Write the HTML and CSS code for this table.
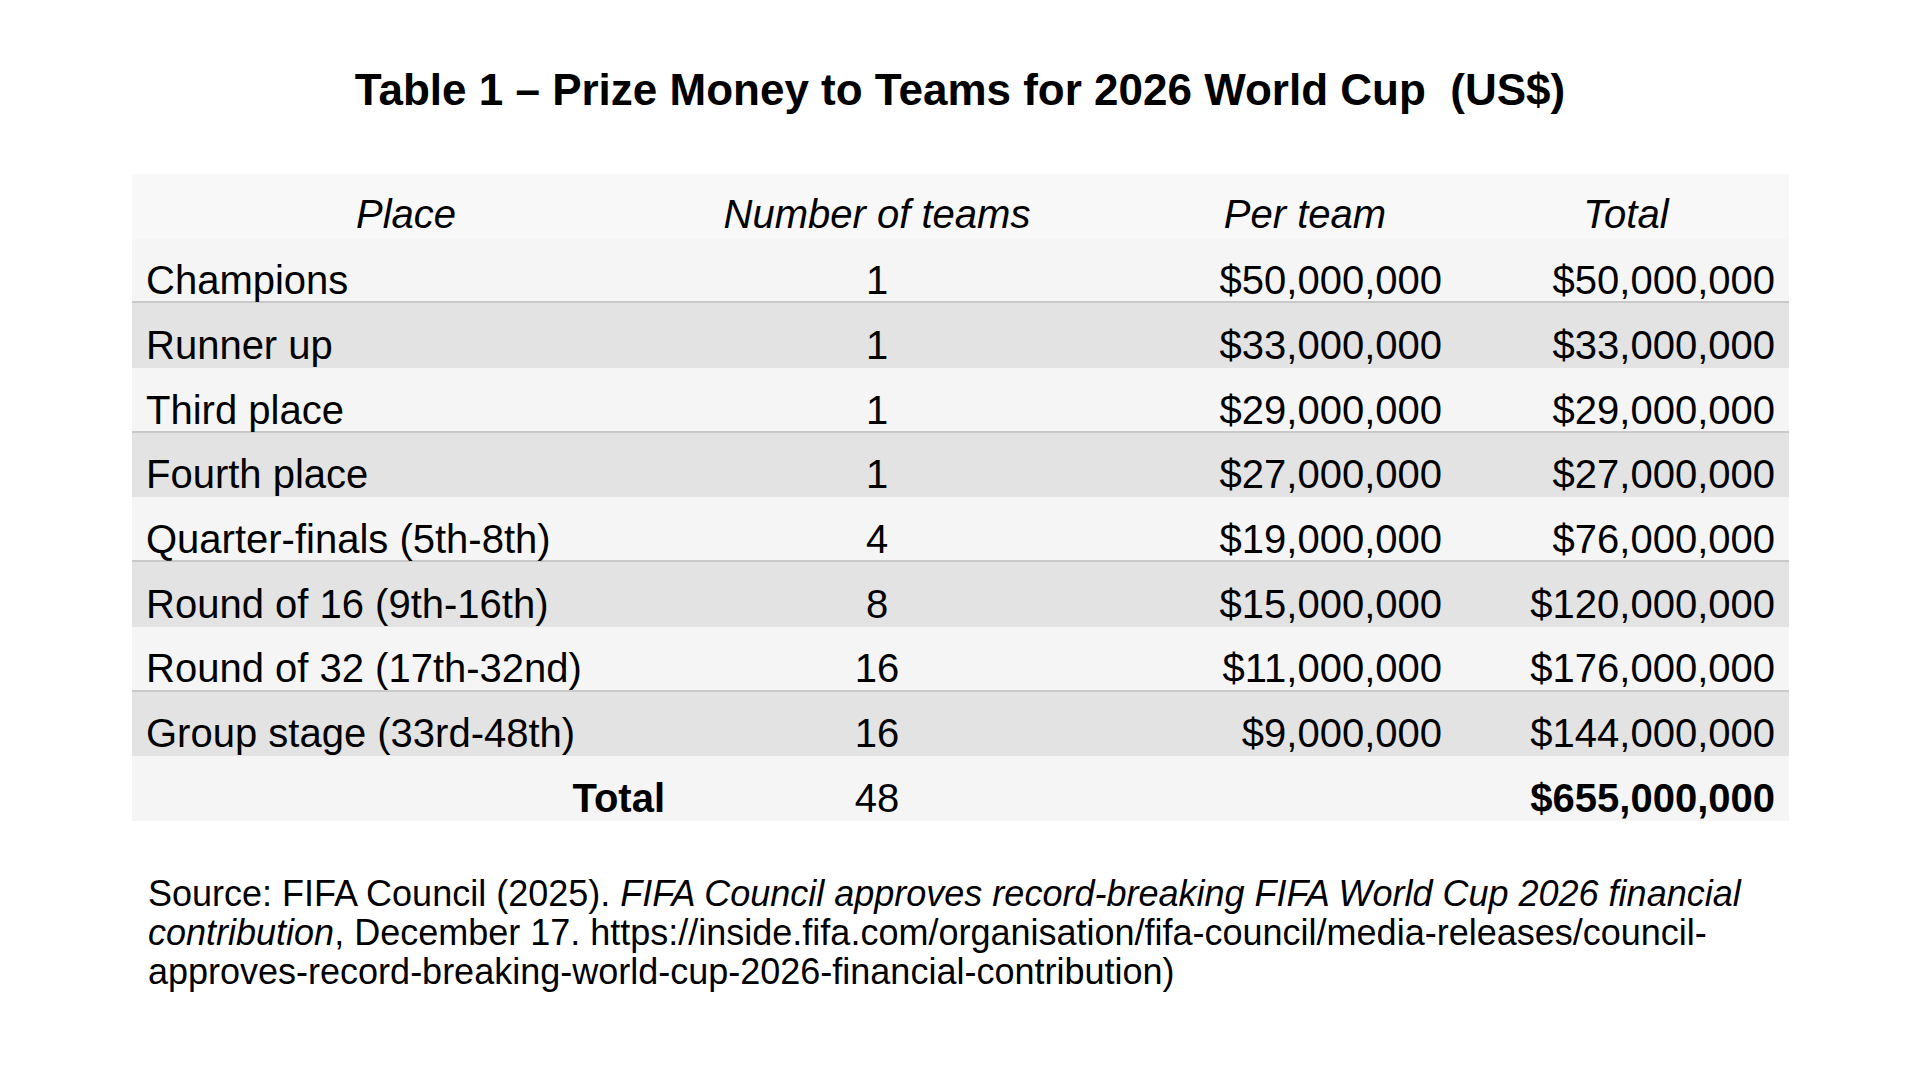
FILE: index.html
```html
<!DOCTYPE html>
<html lang="en">
<head>
<meta charset="utf-8">
<title>Prize Money to Teams for 2026 World Cup</title>
<link rel="stylesheet" href="styles.css">
</head>
<body>
<div class="page">
  <h1 class="title">Table 1 – Prize Money to Teams for 2026 World Cup  (US$)</h1>
  <div class="table">
    <div class="row head">
      <div class="c1">Place</div>
      <div class="c2">Number of teams</div>
      <div class="c3">Per team</div>
      <div class="c4">Total</div>
    </div>
    <div class="row light sep">
      <div class="c1">Champions</div><div class="c2">1</div><div class="c3">$50,000,000</div><div class="c4">$50,000,000</div>
    </div>
    <div class="row dark">
      <div class="c1">Runner up</div><div class="c2">1</div><div class="c3">$33,000,000</div><div class="c4">$33,000,000</div>
    </div>
    <div class="row light sep">
      <div class="c1">Third place</div><div class="c2">1</div><div class="c3">$29,000,000</div><div class="c4">$29,000,000</div>
    </div>
    <div class="row dark">
      <div class="c1">Fourth place</div><div class="c2">1</div><div class="c3">$27,000,000</div><div class="c4">$27,000,000</div>
    </div>
    <div class="row light sep">
      <div class="c1">Quarter-finals (5th-8th)</div><div class="c2">4</div><div class="c3">$19,000,000</div><div class="c4">$76,000,000</div>
    </div>
    <div class="row dark">
      <div class="c1">Round of 16 (9th-16th)</div><div class="c2">8</div><div class="c3">$15,000,000</div><div class="c4">$120,000,000</div>
    </div>
    <div class="row light sep">
      <div class="c1">Round of 32 (17th-32nd)</div><div class="c2">16</div><div class="c3">$11,000,000</div><div class="c4">$176,000,000</div>
    </div>
    <div class="row dark">
      <div class="c1">Group stage (33rd-48th)</div><div class="c2">16</div><div class="c3">$9,000,000</div><div class="c4">$144,000,000</div>
    </div>
    <div class="row light total">
      <div class="c1">Total</div><div class="c2">48</div><div class="c3"></div><div class="c4">$655,000,000</div>
    </div>
  </div>
  <p class="source"><span>Source: FIFA Council (2025). </span><em>FIFA Council approves record-breaking FIFA World Cup 2026 financial</em> <em>contribution</em><span>, December 17. https://inside.fifa.com/organisation/fifa-council/media-releases/council-</span><span>approves-record-breaking-world-cup-2026-financial-contribution)</span></p>
</div>
</body>
</html>
```

FILE: styles.css
```css
html, body {
  margin: 0;
  padding: 0;
  background: #ffffff;
}

body {
  font-family: "Liberation Sans", Arial, sans-serif;
  color: #000000;
}

.page {
  width: 1920px;
  height: 1080px;
  display: flex;
  flex-direction: column;
  align-items: flex-start;
}

.title {
  align-self: stretch;
  margin: 65px 0 0 0;
  font-size: 44px;
  line-height: 50px;
  font-weight: bold;
  text-align: center;
  white-space: pre;
}

.table {
  margin: 59px 0 0 132px;
  width: 1657px;
  display: flex;
  flex-direction: column;
}

.row {
  display: grid;
  grid-template-columns: 546px 398px 380px 333px;
  height: 64.7px;
  box-sizing: border-box;
  padding-top: 19.5px;
  font-size: 40px;
  line-height: 45px;
  white-space: nowrap;
}

.head {
  background: #f8f8f8;
  font-style: italic;
  padding-top: 17.5px;
}

.light {
  background: #f5f5f5;
}

.dark {
  background: #e3e3e3;
}

.sep {
  border-bottom: 2px solid #c9c9c9;
}

.c1 {
  padding-left: 14px;
}

.c2 {
  text-align: center;
}

.c3 {
  text-align: right;
  padding-right: 14px;
}

.c4 {
  text-align: right;
  padding-right: 14px;
}

.head .c1 {
  padding-left: 2px;
  text-align: center;
}

.head .c3 {
  text-align: center;
  padding: 0 0 0 78px;
}

.head .c4 {
  text-align: center;
  padding: 0 0 0 7px;
}

.total .c1 {
  padding: 0 13px 0 0;
  text-align: right;
  font-weight: bold;
}

.total .c4 {
  font-weight: bold;
}

.source {
  margin: 53px 0 0 148px;
  width: 1642px;
  font-size: 36px;
  line-height: 39px;
}

.source em {
  font-style: italic;
}
```
